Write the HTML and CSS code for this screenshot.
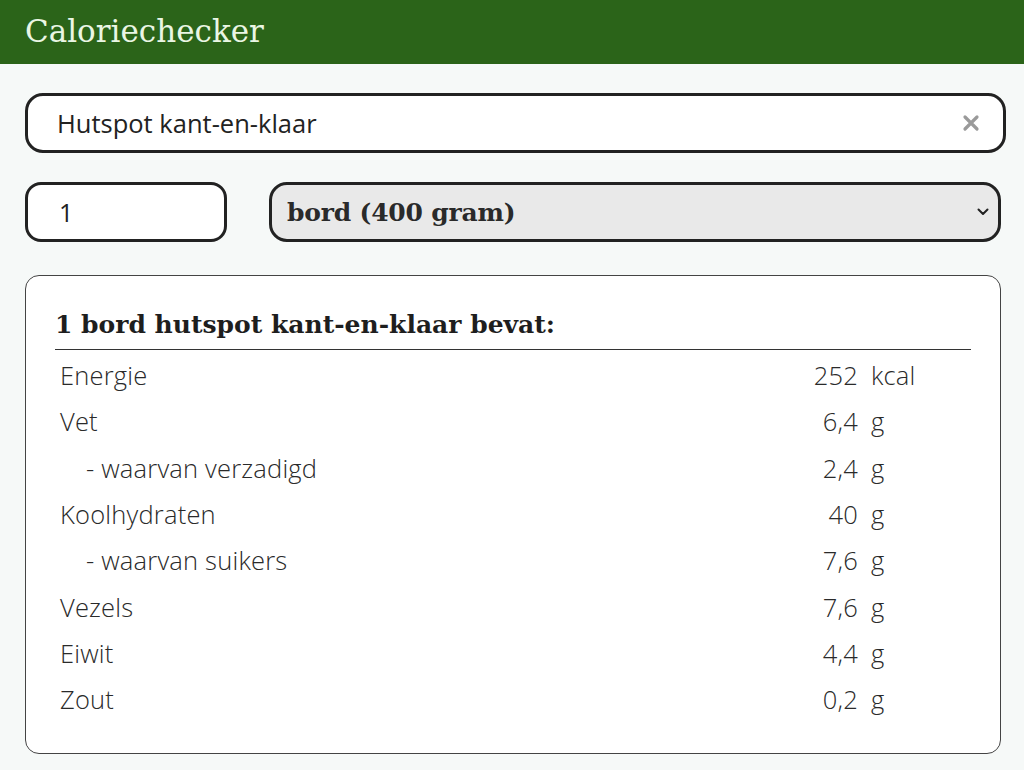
FILE: index.html
```html
<!DOCTYPE html>
<html lang="nl">
<head>
<meta charset="utf-8">
<title>Caloriechecker</title>
<link rel="stylesheet" href="styles.css">
</head>
<body>
<header class="topbar"><h1 class="brand">Caloriechecker</h1></header>
<main class="content">
  <div class="search">
    <span class="search-text">Hutspot kant-en-klaar</span>
    <svg class="clear" width="18" height="18" viewBox="0 0 18 18"><path d="M3 3L15 15M15 3L3 15" stroke="#9a9a9a" stroke-width="3.2" stroke-linecap="round"/></svg>
  </div>
  <div class="controls">
    <div class="qty">1</div>
    <div class="unit">
      <span class="unit-text">bord (400 gram)</span>
      <svg class="chev" width="12" height="8" viewBox="0 0 12 8"><path d="M1.5 1.5L6 6L10.5 1.5" fill="none" stroke="#222" stroke-width="2" stroke-linecap="round" stroke-linejoin="round"/></svg>
    </div>
  </div>
  <section class="card">
    <h2 class="card-title">1 bord hutspot kant-en-klaar bevat:</h2>
    <div class="rows">
      <div class="row"><span class="name">Energie</span><span class="val">252</span><span class="u">kcal</span></div>
      <div class="row"><span class="name">Vet</span><span class="val">6,4</span><span class="u">g</span></div>
      <div class="row"><span class="name sub">- waarvan verzadigd</span><span class="val">2,4</span><span class="u">g</span></div>
      <div class="row"><span class="name">Koolhydraten</span><span class="val">40</span><span class="u">g</span></div>
      <div class="row"><span class="name sub">- waarvan suikers</span><span class="val">7,6</span><span class="u">g</span></div>
      <div class="row"><span class="name">Vezels</span><span class="val">7,6</span><span class="u">g</span></div>
      <div class="row"><span class="name">Eiwit</span><span class="val">4,4</span><span class="u">g</span></div>
      <div class="row"><span class="name">Zout</span><span class="val">0,2</span><span class="u">g</span></div>
    </div>
  </section>
</main>
</body>
</html>
```
FILE: styles.css
```css
html, body { margin: 0; padding: 0; }
body {
  background: #f6f9f8;
  font-family: "Open Sans", "Noto Sans", sans-serif;
  color: #2a2a2a;
  width: 1024px;
  height: 770px;
  overflow: hidden;
}
.topbar {
  background: #2b6419;
  height: 64px;
  display: flex;
  align-items: center;
  padding-left: 25px;
}
.brand {
  margin: 0;
  font-family: "DejaVu Serif", serif;
  font-weight: normal;
  font-size: 31px;
  color: #eaf6e4;
  padding-bottom: 3px;
}
.content {
  padding: 29px 19px 0 25px;
}
.search {
  box-sizing: border-box;
  height: 60px;
  width: 981px;
  border: 3px solid #222;
  border-radius: 18px;
  background: #fff;
  display: flex;
  align-items: center;
  justify-content: space-between;
  padding: 0 23px 0 29px;
}
.search-text { font-size: 25.5px; font-weight: 400; color: #222; }
.controls {
  display: flex;
  gap: 42px;
  margin-top: 29px;
}
.qty {
  box-sizing: border-box;
  width: 202px;
  height: 60px;
  border: 3px solid #222;
  border-radius: 16px;
  background: #fff;
  display: flex;
  align-items: center;
  padding-left: 31px;
  font-size: 25px;
  color: #222;
}
.unit {
  box-sizing: border-box;
  width: 732px;
  height: 60px;
  border: 3px solid #222;
  border-radius: 18px;
  background: #e9e9e9;
  display: flex;
  align-items: center;
  justify-content: space-between;
  padding: 0 9px 0 15px;
}
.unit-text {
  font-family: "DejaVu Serif", serif;
  font-weight: bold;
  font-size: 25px;
  letter-spacing: -0.2px;
  color: #2a2a2a;
}
.card {
  box-sizing: border-box;
  margin-top: 33px;
  width: 976px;
  height: 479px;
  border: 1.5px solid #444;
  border-radius: 14px;
  background: #fff;
  padding: 34px 29px 0 29px;
}
.card-title {
  margin: 0;
  font-family: "DejaVu Serif", serif;
  font-weight: bold;
  font-size: 25px;
  color: #1e1e1e;
  padding-bottom: 10px;
  border-bottom: 1.5px solid #333;
}
.rows { padding-top: 2px; }
.row {
  display: flex;
  align-items: center;
  height: 46.3px;
  font-size: 25.5px;
  font-weight: 300;
  letter-spacing: 0.2px;
  color: #2a2a2a;
}
.name { flex: 1; padding-left: 5px; }
.name.sub { padding-left: 31px; }
.val { width: 100px; text-align: right; }
.u { width: 100px; padding-left: 13px; }
```
